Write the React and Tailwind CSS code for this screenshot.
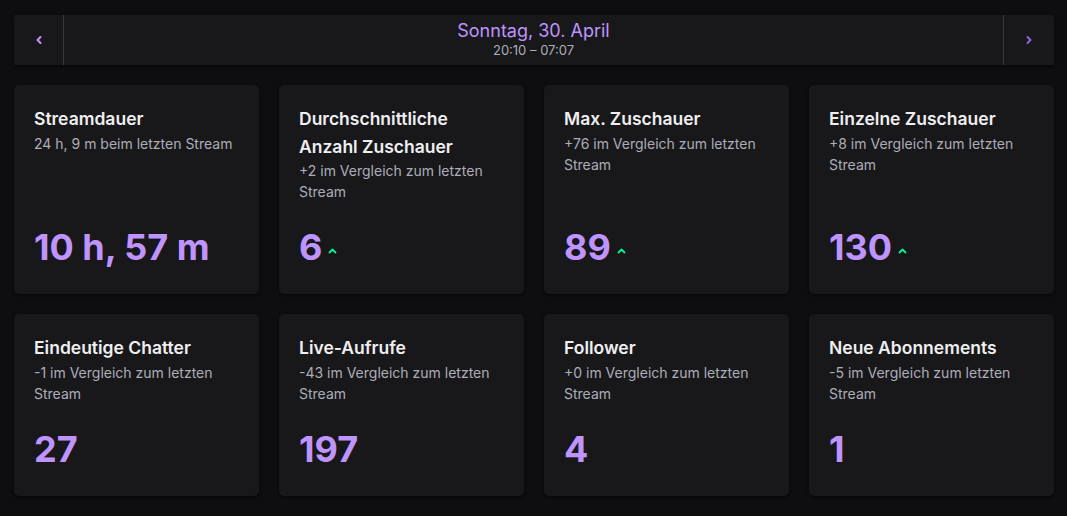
import React from 'react';

const stats = [
  { title: 'Streamdauer', sub: '24 h, 9 m beim letzten Stream', value: '10 h, 57 m' },
  { title: 'Durchschnittliche Anzahl Zuschauer', sub: '+2 im Vergleich zum letzten Stream', value: '6', up: true },
  { title: 'Max. Zuschauer', sub: '+76 im Vergleich zum letzten Stream', value: '89', up: true },
  { title: 'Einzelne Zuschauer', sub: '+8 im Vergleich zum letzten Stream', value: '130', up: true },
  { title: 'Eindeutige Chatter', sub: '-1 im Vergleich zum letzten Stream', value: '27' },
  { title: 'Live-Aufrufe', sub: '-43 im Vergleich zum letzten Stream', value: '197' },
  { title: 'Follower', sub: '+0 im Vergleich zum letzten Stream', value: '4' },
  { title: 'Neue Abonnements', sub: '-5 im Vergleich zum letzten Stream', value: '1' },
];

const Chevron = ({ dir }) => (
  <svg width="8" height="10" viewBox="0 0 8 10" fill="none">
    <path
      d={dir === 'left' ? 'M5.5 2 L2.5 5 L5.5 8' : 'M2.5 2 L5.5 5 L2.5 8'}
      stroke="currentColor"
      strokeWidth="2"
      strokeLinecap="round"
      strokeLinejoin="round"
    />
  </svg>
);

const UpArrow = () => (
  <svg width="9" height="6" viewBox="0 0 9 6" fill="none" className="ml-[6px] mt-[7px]">
    <path d="M1.5 4.5 L4.5 1.5 L7.5 4.5" stroke="#00f593" strokeWidth="1.8" strokeLinecap="round" strokeLinejoin="round" />
  </svg>
);

const StatCard = ({ stat }) => (
  <div className="bg-[#18181b] rounded-[5px] shadow-[0_1px_3px_rgba(0,0,0,0.6)] px-5 pt-5 pb-[23px] flex flex-col">
    <div className="text-[17.5px] leading-[27.5px] font-semibold text-[#efeff1]">{stat.title}</div>
    <div className="text-[14px] leading-[21px] text-[#adadb8]">{stat.sub}</div>
    <div className="flex-1" />
    <div className="flex items-center mt-[21px]">
      <span className="text-[36px] leading-[48px] font-bold text-[#bf94ff]">{stat.value}</span>
      {stat.up && <UpArrow />}
    </div>
  </div>
);

export default function App() {
  return (
    <div
      className="min-h-screen bg-[#0e0e10] pl-[14px] pr-[13px] pt-[15px] pb-5"
      style={{ fontFamily: 'Inter, "Noto Sans", sans-serif' }}
    >
      <div className="flex h-[50px] bg-[#18181b] shadow-[0_1px_3px_rgba(0,0,0,0.6)]">
        <button className="w-[50px] flex items-center justify-center border-r border-[#3a3a3d] text-[#bf94ff]">
          <Chevron dir="left" />
        </button>
        <div className="flex-1 flex flex-col items-center justify-center">
          <div className="text-[18px] leading-[20px] text-[#bf94ff]">Sonntag, 30. April</div>
          <div className="text-[13px] leading-[17px] mt-[1px] text-[#adadb8]">20:10 – 07:07</div>
        </div>
        <button className="w-[51px] flex items-center justify-center border-l border-[#3a3a3d] text-[#8f62d8]">
          <Chevron dir="right" />
        </button>
      </div>

      <div className="grid grid-cols-4 gap-5 mt-5">
        {stats.map((s) => (
          <StatCard key={s.title} stat={s} />
        ))}
      </div>
    </div>
  );
}
